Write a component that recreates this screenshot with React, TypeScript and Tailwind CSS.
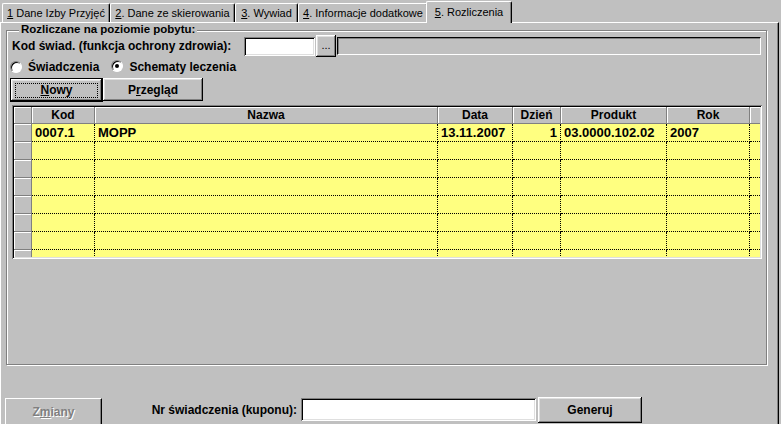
import React from "react";

const raised =
  "shadow-[inset_-1px_-1px_#000,inset_1px_1px_#fff,inset_-2px_-2px_#808080,inset_2px_2px_#dfdfdf]";
const sunken =
  "shadow-[inset_1px_1px_#808080,inset_-1px_-1px_#fff,inset_2px_2px_#000,inset_-2px_-2px_#dfdfdf]";

const tabs = [
  { key: "1", rest: " Dane Izby Przyjęć", w: "w-[108px]" },
  { key: "2", rest: ". Dane ze skierowania", w: "w-[125px]" },
  { key: "3", rest: ". Wywiad", w: "w-[63px]" },
  { key: "4", rest: ". Informacje dodatkowe", w: "w-[130px]" },
];

const cols = [
  { name: "Kod", w: "w-[63px]" },
  { name: "Nazwa", w: "w-[343px]" },
  { name: "Data", w: "w-[75px]" },
  { name: "Dzień", w: "w-[48px]" },
  { name: "Produkt", w: "w-[106px]" },
  { name: "Rok", w: "w-[83px]" },
];

const row = ["0007.1", "MOPP", "13.11.2007", "1", "03.0000.102.02", "2007"];

function Radio({ checked }: { checked?: boolean }) {
  return (
    <span className="relative inline-block w-[12px] h-[12px] rounded-full bg-white border border-t-[#808080] border-l-[#808080] border-b-white border-r-white shadow-[inset_1px_1px_#000]">
      {checked && (
        <span className="absolute left-[3px] top-[3px] w-[4px] h-[4px] rounded-full bg-black" />
      )}
    </span>
  );
}

function Grid() {
  return (
    <div className={`ml-[5px] mt-[3px] w-[750px] h-[154px] p-[2px] ${sunken} bg-[#c0c0c0]`}>
      <div className="h-[150px] overflow-hidden">
        {/* nagłówek */}
        <div className="flex h-[17px] font-bold text-[12px]">
          <div className="w-[18px] h-full bg-[#c0c0c0] border-r border-b border-[#808080] shadow-[inset_1px_1px_#fff]" />
          {cols.map((c) => (
            <div
              key={c.name}
              className={`${c.w} h-full flex items-center justify-center bg-[#c0c0c0] border-r border-b border-[#808080] shadow-[inset_1px_1px_#fff]`}
            >
              {c.name}
            </div>
          ))}
          <div className="w-[10px] h-full bg-[#c0c0c0] border-b border-[#808080] shadow-[inset_1px_1px_#fff]" />
        </div>
        {/* wiersze */}
        {Array.from({ length: 8 }).map((_, i) => (
          <div key={i} className="flex h-[18px] font-bold text-[13px]">
            <div className="w-[18px] h-full bg-[#c0c0c0] border-r border-b border-[#808080] shadow-[inset_1px_1px_#fff]" />
            {cols.map((c, j) => (
              <div
                key={c.name}
                className={`${c.w} h-full flex items-center bg-[#ffff80] border-r border-b border-dotted border-black ${
                  j === 3 ? "justify-end pr-[3px]" : "pl-[3px]"
                }`}
              >
                {i === 0 ? row[j] : ""}
              </div>
            ))}
            <div className="w-[10px] h-full bg-[#ffff80] border-b border-dotted border-black" />
          </div>
        ))}
      </div>
    </div>
  );
}

export default function App() {
  return (
    <div className="w-[781px] h-[424px] bg-[#c0c0c0] overflow-hidden text-black text-[11px] leading-none font-['Liberation_Sans',Arial,sans-serif]">
      {/* ZAKŁADKI */}
      <div className="flex items-end h-[22px] pl-[2px]">
        {tabs.map((t) => (
          <div
            key={t.key}
            className={`${t.w} h-[19px] flex items-center justify-center border-t border-l border-r border-t-white border-l-white border-r-black rounded-t-[2px] shadow-[inset_-1px_0_#808080]`}
          >
            <span>
              <span className="underline">{t.key}</span>
              {t.rest}
            </span>
          </div>
        ))}
        <div className="w-[86px] h-[22px] -ml-[2px] flex items-center justify-center border-t border-l border-r border-t-white border-l-white border-r-black rounded-t-[2px] shadow-[inset_-1px_0_#808080] bg-[#c0c0c0] relative z-10 -mb-[1px] pb-[1px]">
          <span>
            <span className="underline">5</span>. Rozliczenia
          </span>
        </div>
      </div>

      {/* PANEL */}
      <div className="w-[779px] h-[402px] border-t border-l border-r border-t-white border-l-white border-r-black shadow-[inset_-1px_0_#808080] flex flex-col text-[12px]">
        {/* RAMKA */}
        <div className="relative ml-[5px] mt-[7px] w-[761px] h-[336px] border border-[#808080] shadow-[inset_1px_1px_#fff,1px_1px_#fff]">
          <span className="absolute -top-[7px] left-[12px] px-[2px] bg-[#c0c0c0] font-bold text-[11.5px]">
            Rozliczane na poziomie pobytu:
          </span>

          {/* Kod świad. */}
          <div className="flex items-center mt-[4px] pl-[5px] h-[22px]">
            <span className="w-[232px] font-bold">Kod świad. (funkcja ochrony zdrowia):</span>
            <div className={`w-[71px] h-[19px] bg-white ${sunken}`} />
            <div className={`ml-[1px] w-[20px] h-[22px] flex items-center justify-center text-[11px] ${raised}`}>
              <span className="-mt-[2px]">...</span>
            </div>
            <div className="ml-[1px] w-[424px] h-[18px] border border-t-black border-l-black border-b-white border-r-white shadow-[inset_1px_1px_#808080]" />
          </div>

          {/* RADIO */}
          <div className="flex items-center mt-[1px] pl-[3px] h-[18px] font-bold">
            <Radio />
            <span className="ml-[6px]">Świadczenia</span>
            <span className="ml-[12px]">
              <Radio checked />
            </span>
            <span className="ml-[6px]">Schematy leczenia</span>
          </div>

          {/* PRZYCISKI */}
          <div className="flex mt-[2px] pl-[3px] font-bold">
            <div className="w-[93px] h-[24px] border border-black">
              <div className={`w-full h-full flex items-center justify-center ${raised}`}>
                <div className="w-[83px] h-[15px] flex items-center justify-center border border-dotted border-black">
                  <span>
                    <span className="underline">N</span>owy
                  </span>
                </div>
              </div>
            </div>
            <div className={`w-[100px] h-[23px] flex items-center justify-center ${raised}`}>
              <span>
                P<span className="underline">r</span>zegląd
              </span>
            </div>
          </div>

          <Grid />
        </div>

        {/* DÓŁ */}
        <div className="flex items-start mt-[33px] pl-[4px] font-bold">
          <div className="w-[97px] h-[26px] flex items-center justify-center border-t border-l border-r border-t-white border-l-white border-r-black shadow-[inset_-1px_0_#808080]">
            <span className="text-[#808080] [text-shadow:1px_1px_#fff]">
              Z<span className="underline">m</span>iany
            </span>
          </div>
          <span className="w-[199px] h-[23px] flex items-center justify-end pr-[4px]">
            Nr świadczenia (kuponu):
          </span>
          <div className={`w-[235px] h-[23px] bg-white ${sunken}`} />
          <div className={`ml-[2px] w-[104px] h-[26px] -mt-[1px] flex items-center justify-center ${raised}`}>
            Generuj
          </div>
        </div>
      </div>
    </div>
  );
}
